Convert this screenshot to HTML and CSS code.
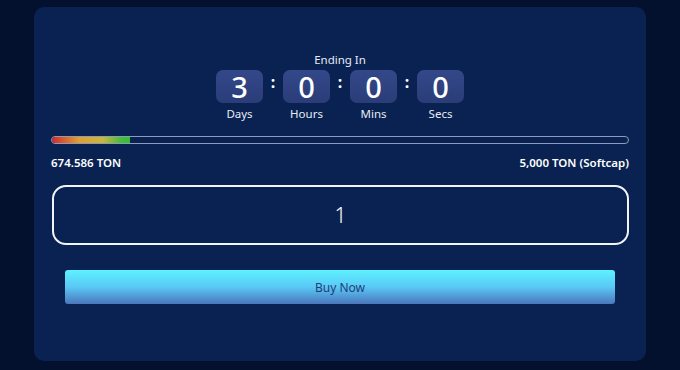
FILE: index.html
```html
<!DOCTYPE html>
<html lang="en">
<head>
    <meta charset="UTF-8">
    <title>Presale</title>
    <link rel="stylesheet" href="styles.css">
</head>
<body>
<div class="card">
    <div class="ending">Ending In</div>
    <div class="timer">
        <div class="unit">
            <div class="digit">3</div>
            <div class="unit-label">Days</div>
        </div>
        <div class="colon">:</div>
        <div class="unit">
            <div class="digit">0</div>
            <div class="unit-label">Hours</div>
        </div>
        <div class="colon">:</div>
        <div class="unit">
            <div class="digit">0</div>
            <div class="unit-label">Mins</div>
        </div>
        <div class="colon">:</div>
        <div class="unit">
            <div class="digit">0</div>
            <div class="unit-label">Secs</div>
        </div>
    </div>
    <div class="progress">
        <div class="progress-fill" style="width: 13.5%"></div>
    </div>
    <div class="amounts">
        <span>674.586 TON</span>
        <span>5,000 TON (Softcap)</span>
    </div>
    <div class="amount-input">1</div>
    <button class="buy">Buy Now</button>
</div>
</body>
</html>
```

FILE: styles.css
```css
body {
    margin: 0;
    height: 370px;
    background: #03112e;
    font-family: "Noto Sans", sans-serif;
    color: #fff;
    overflow: hidden;
}
.card {
    margin: 7px 0 0 34px;
    width: 612px;
    height: 354px;
    box-sizing: border-box;
    background: #0a2251;
    border-radius: 10px;
    padding: 46px 17px 0 17px;
}
.ending {
    text-align: center;
    font-size: 11.5px;
    line-height: 14px;
    color: #e6ebf5;
}
.timer {
    display: flex;
    justify-content: center;
    align-items: flex-start;
    margin-top: 3px;
}
.unit {
    display: flex;
    flex-direction: column;
    align-items: center;
    width: 47px;
}
.digit {
    width: 47px;
    height: 33px;
    border-radius: 7px;
    background: linear-gradient(180deg, #34488a 0%, #2a3d78 100%);
    font-size: 29px;
    line-height: 33px;
    text-align: center;
    font-weight: 500;
}
.unit-label {
    margin-top: 4px;
    font-size: 11.5px;
    line-height: 14px;
    color: #e6ebf5;
}
.colon {
    width: 20px;
    text-align: center;
    font-size: 16px;
    line-height: 24px;
    font-weight: 700;
}
.progress {
    margin-top: 15px;
    height: 6px;
    border: 1px solid #8c9bbd;
    border-radius: 5px;
    overflow: hidden;
}
.progress-fill {
    height: 100%;
    background: linear-gradient(90deg, #d42a2a 0%, #e0a030 35%, #c8b838 65%, #3fbd3a 90%, #30c030 100%);
    border-radius: 5px 0 0 5px;
}
.amounts {
    display: flex;
    justify-content: space-between;
    margin-top: 12px;
    font-size: 11.5px;
    line-height: 14px;
    font-weight: 600;
}
.amount-input {
    margin: 15px 0 0 1px;
    height: 56px;
    border: 2px solid #f2f4f8;
    border-radius: 14px;
    text-align: center;
    font-size: 21px;
    line-height: 56px;
    font-weight: 300;
}
.buy {
    display: block;
    margin: 25px 14px 0 14px;
    width: calc(100% - 28px);
    height: 34px;
    border: none;
    border-radius: 3px;
    background: linear-gradient(180deg, #5df2ff 0%, #5ac8f6 50%, #4b76bb 100%);
    color: #1e3d78;
    font-family: "Noto Sans", sans-serif;
    font-size: 12px;
}
```
